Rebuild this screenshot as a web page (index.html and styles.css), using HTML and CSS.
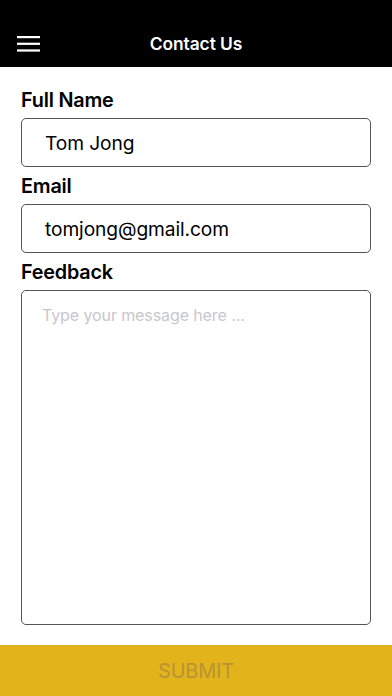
FILE: index.html
```html
<!DOCTYPE html>
<html>
<head>
<meta charset="utf-8">
<link rel="stylesheet" href="styles.css">
</head>
<body>
<div class="app">
  <header class="topbar">
    <div class="menu">
      <svg width="23" height="16" viewBox="0 0 23 16"><rect x="0" y="0" width="23" height="2.2" fill="#fff"/><rect x="0" y="6.7" width="23" height="2.2" fill="#fff"/><rect x="0" y="13.4" width="23" height="2.2" fill="#fff"/></svg>
    </div>
    <div class="title">Contact Us</div>
  </header>
  <main class="form">
    <div class="label">Full Name</div>
    <div class="field"><span class="value">Tom Jong</span></div>
    <div class="label">Email</div>
    <div class="field"><span class="value">tomjong@gmail.com</span></div>
    <div class="label">Feedback</div>
    <div class="area"><span class="placeholder">Type your message here ...</span></div>
  </main>
  <div class="submit">SUBMIT</div>
</div>
</body>
</html>
```
FILE: styles.css
```css
* { box-sizing: border-box; }
html, body { margin: 0; padding: 0; background: #fff; }
body { font-family: Inter, "Liberation Sans", Arial, sans-serif; }
.app { width: 392px; height: 696px; display: flex; flex-direction: column; }
.topbar { height: 67px; background: #000; position: relative; display: flex; align-items: flex-end; justify-content: center; padding-bottom: 12px; }
.menu { position: absolute; left: 17px; top: 36px; width: 23px; height: 16px; line-height: 0; }
.title { color: #fff; font-size: 17.4px; font-weight: 600; letter-spacing: -0.1px; line-height: 22px; }
.form { flex: 1; padding: 14px 21px 0 21px; display: flex; flex-direction: column; }
.label { height: 37px; line-height: 35px; padding-top: 2px; font-size: 19.8px; font-weight: 600; color: #000; letter-spacing: -0.2px; }
.field { height: 49px; border: 1.3px solid #555; border-radius: 5px; display: flex; align-items: center; padding-left: 23px; }
.value { font-size: 19.2px; color: #000; letter-spacing: -0.1px; }
.area { height: 335px; border: 1.3px solid #555; border-radius: 5px; padding: 14px 0 0 20px; line-height: 20px; }
.placeholder { font-size: 16px; color: #c7c7cd; letter-spacing: -0.1px; }
.submit { height: 51px; background: #e3b31c; color: #b89434; font-size: 20px; display: flex; align-items: center; justify-content: center; letter-spacing: -0.2px; }
```
